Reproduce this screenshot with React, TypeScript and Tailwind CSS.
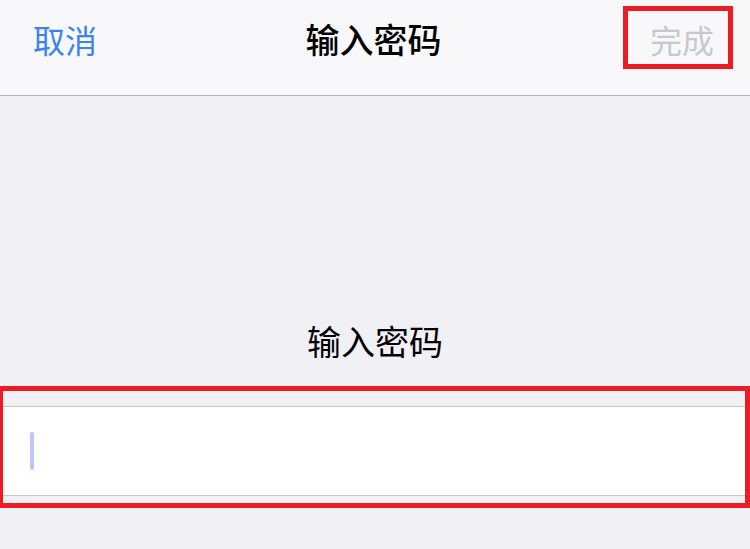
import React from "react";

export default function App() {
  const font = { fontFamily: '"Noto Sans CJK SC", "Noto Sans", sans-serif' };
  return (
    <div
      className="relative w-[750px] h-[549px] overflow-hidden bg-[#f1f0f5] flex flex-col"
      style={font}
    >
      <div className="h-[96px] shrink-0 bg-[#f8f8fa] border-b border-[#b4b4b8]">
        <div className="h-[77px] flex items-center justify-between px-[33px]">
          <span className="text-[32px] leading-[34px] text-[#3a82f6]">取消</span>
          <span className="text-[34px] leading-[34px] font-medium text-black">输入密码</span>
          <span className="text-[32px] leading-[34px] text-[#c8c8cc] mr-[3px]">完成</span>
        </div>
      </div>
      <div className="pt-[228px] flex justify-center">
        <span className="text-[34px] leading-[34px] text-black">输入密码</span>
      </div>
      <div className="mt-[48px] h-[90px] bg-white border-y border-[#c8c7cc] flex items-center pl-[30px]">
        <div className="w-[4px] h-[38px] rounded-full bg-[#bcc6f4]" />
      </div>
      <div className="absolute left-[623px] top-[6px] w-[110px] h-[63px] border-[5px] border-[#ec1c24]" />
      <div className="absolute left-[-2px] top-[386px] w-[752px] h-[122px] border-[5px] border-[#ec1c24]" />
    </div>
  );
}
